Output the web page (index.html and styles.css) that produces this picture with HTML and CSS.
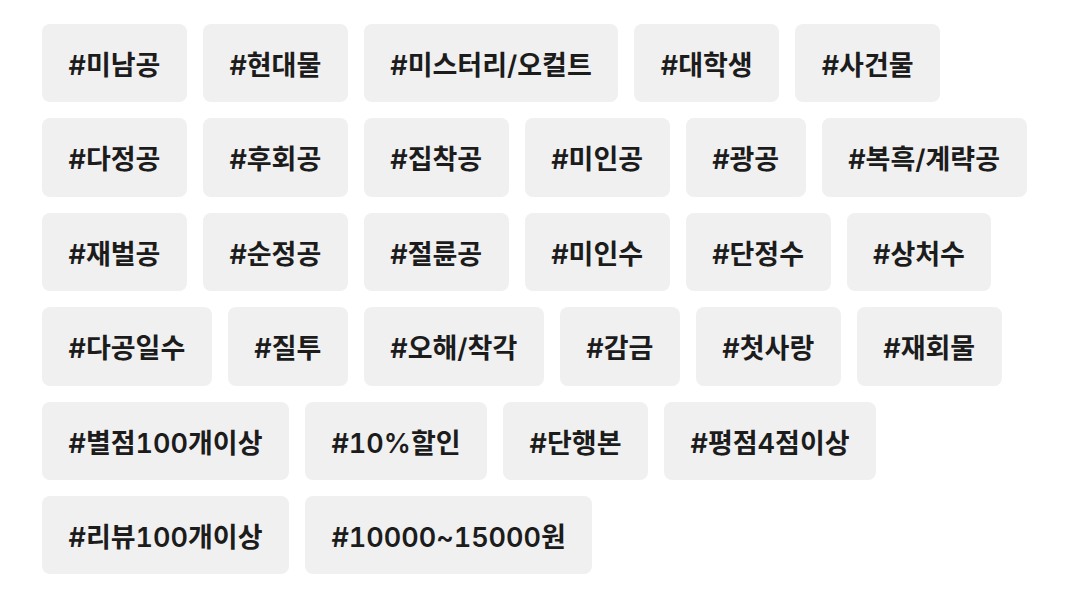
FILE: index.html
```html
<!DOCTYPE html>
<html lang="ko">
<head>
  <meta charset="UTF-8">
  <meta name="viewport" content="width=device-width, initial-scale=1.0">
  <title>키워드 태그</title>
  <link rel="stylesheet" href="styles.css">
</head>
<body>
  <!-- Keyword tags -->
  <div class="tag-list">
    <span class="tag">#미남공</span>
    <span class="tag">#현대물</span>
    <span class="tag">#미스터리/오컬트</span>
    <span class="tag">#대학생</span>
    <span class="tag">#사건물</span>
    <span class="tag">#다정공</span>
    <span class="tag">#후회공</span>
    <span class="tag">#집착공</span>
    <span class="tag">#미인공</span>
    <span class="tag">#광공</span>
    <span class="tag">#복흑/계략공</span>
    <span class="tag">#재벌공</span>
    <span class="tag">#순정공</span>
    <span class="tag">#절륜공</span>
    <span class="tag">#미인수</span>
    <span class="tag">#단정수</span>
    <span class="tag">#상처수</span>
    <span class="tag">#다공일수</span>
    <span class="tag">#질투</span>
    <span class="tag">#오해/착각</span>
    <span class="tag">#감금</span>
    <span class="tag">#첫사랑</span>
    <span class="tag">#재회물</span>
    <span class="tag">#별점100개이상</span>
    <span class="tag">#10%할인</span>
    <span class="tag">#단행본</span>
    <span class="tag">#평점4점이상</span>
    <span class="tag">#리뷰100개이상</span>
    <span class="tag">#10000~15000원</span>
  </div>
</body>
</html>
```

FILE: styles.css
```css
body {
  margin: 0;
  padding: 24px 42px;
  background: #fff;
  font-family: Inter, 'Noto Sans CJK KR', sans-serif;
}

.tag-list {
  display: flex;
  flex-wrap: wrap;
  gap: 16px;
}

.tag {
  display: inline-block;
  box-sizing: border-box;
  height: 78.4px;
  line-height: 72px;
  padding: 6px 26.5px 0;
  background: #f0f0f0;
  border-radius: 8px;
  color: #1c1c1c;
  font-size: 27px;
  font-weight: 600;
  font-variant-numeric: tabular-nums;
  white-space: nowrap;
}
```
